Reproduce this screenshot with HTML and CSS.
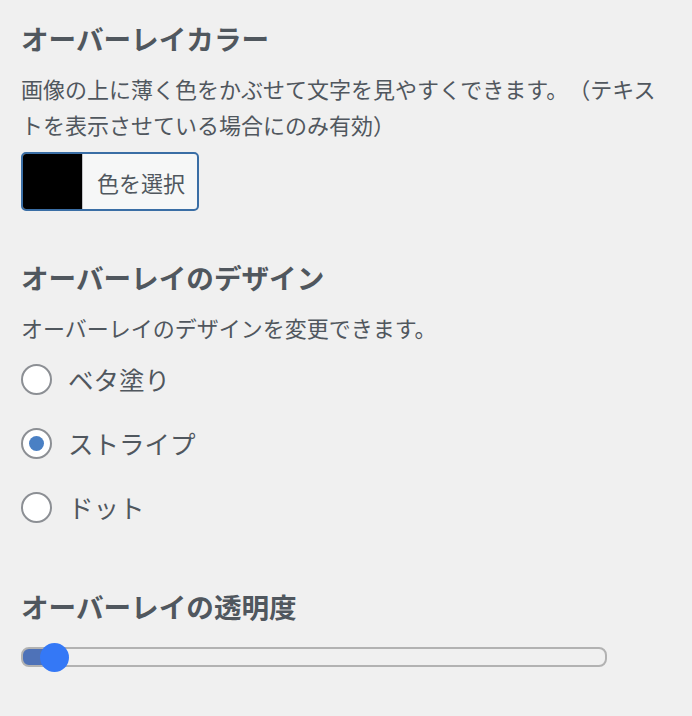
FILE: index.html
```html
<!DOCTYPE html>
<html lang="ja">
<head>
    <meta charset="UTF-8">
    <title>オーバーレイ設定</title>
    <link rel="stylesheet" href="styles.css">
</head>
<body>
    <div class="panel">
        <!-- Overlay color -->
        <div class="field">
            <h2 class="label">オーバーレイカラー</h2>
            <p class="help">画像の上に薄く色をかぶせて文字を見やすくできます。（テキストを表示させている場合にのみ有効）</p>
            <button class="color-btn" type="button">
                <span class="swatch"></span>
                <span class="color-text">色を選択</span>
            </button>
        </div>

        <!-- Overlay design -->
        <div class="field">
            <h2 class="label">オーバーレイのデザイン</h2>
            <p class="help help-tight">オーバーレイのデザインを変更できます。</p>
            <div class="radios">
                <label class="radio"><input type="radio" name="design" value="solid"> ベタ塗り</label>
                <label class="radio"><input type="radio" name="design" value="stripe" checked> ストライプ</label>
                <label class="radio"><input type="radio" name="design" value="dot"> ドット</label>
            </div>
        </div>

        <!-- Overlay opacity -->
        <div class="field">
            <h2 class="label">オーバーレイの透明度</h2>
            <input class="range" type="range" min="0" max="100" value="3">
        </div>
    </div>
</body>
</html>
```

FILE: styles.css
```css
body {
    margin: 0;
    background-color: #f0f0f0;
    color: #50575e;
    font-family: "Noto Sans CJK JP", "Noto Sans", sans-serif;
    text-spacing-trim: space-all;
}
.panel {
    padding: 20px 21px 0;
    width: 650px;
}
.field {
    margin-bottom: 48px;
}
.field:nth-child(2) {
    margin-bottom: 65px;
}
.label {
    margin: 0 0 14px;
    font-size: 27.6px;
    line-height: 36px;
    font-weight: 700;
}
.help {
    margin: 0 0 10px;
    font-size: 22px;
    line-height: 36px;
}
.help-tight {
    margin-bottom: 18px;
}
.color-btn {
    display: flex;
    align-items: stretch;
    padding: 0;
    height: 59px;
    border: 2px solid #3a6ea5;
    border-radius: 5px;
    background-color: #f6f7f7;
    overflow: hidden;
    cursor: pointer;
}
.swatch {
    width: 59px;
    background-color: #000;
    border-right: 1px solid #c3c4c7;
}
.color-text {
    display: flex;
    align-items: center;
    padding: 0 12px 0 14px;
    font-family: "Noto Sans CJK JP", sans-serif;
    font-size: 22px;
    color: #50575e;
}
.radios {
    display: flex;
    flex-direction: column;
    gap: 32px;
}
.radio {
    display: flex;
    align-items: center;
    gap: 16px;
    font-size: 25.5px;
    line-height: 32px;
}
.radio input {
    appearance: none;
    margin: 0;
    width: 31px;
    height: 31px;
    border: 2px solid #8c8f94;
    border-radius: 50%;
    background-color: #fff;
    display: grid;
    place-content: center;
}
.radio input:checked::before {
    content: "";
    width: 15px;
    height: 15px;
    border-radius: 50%;
    background-color: #4a80c4;
}
.range {
    -webkit-appearance: none;
    appearance: none;
    display: block;
    margin: 23px 0 0;
    width: 582px;
    height: 16px;
    border: 2px solid #b2b2b2;
    border-radius: 8px;
    background: linear-gradient(to right, #4e72b8 0 30px, #f0f0f0 30px);
}
.range::-webkit-slider-thumb {
    -webkit-appearance: none;
    width: 29px;
    height: 29px;
    border-radius: 50%;
    background-color: #3478f6;
}
```
